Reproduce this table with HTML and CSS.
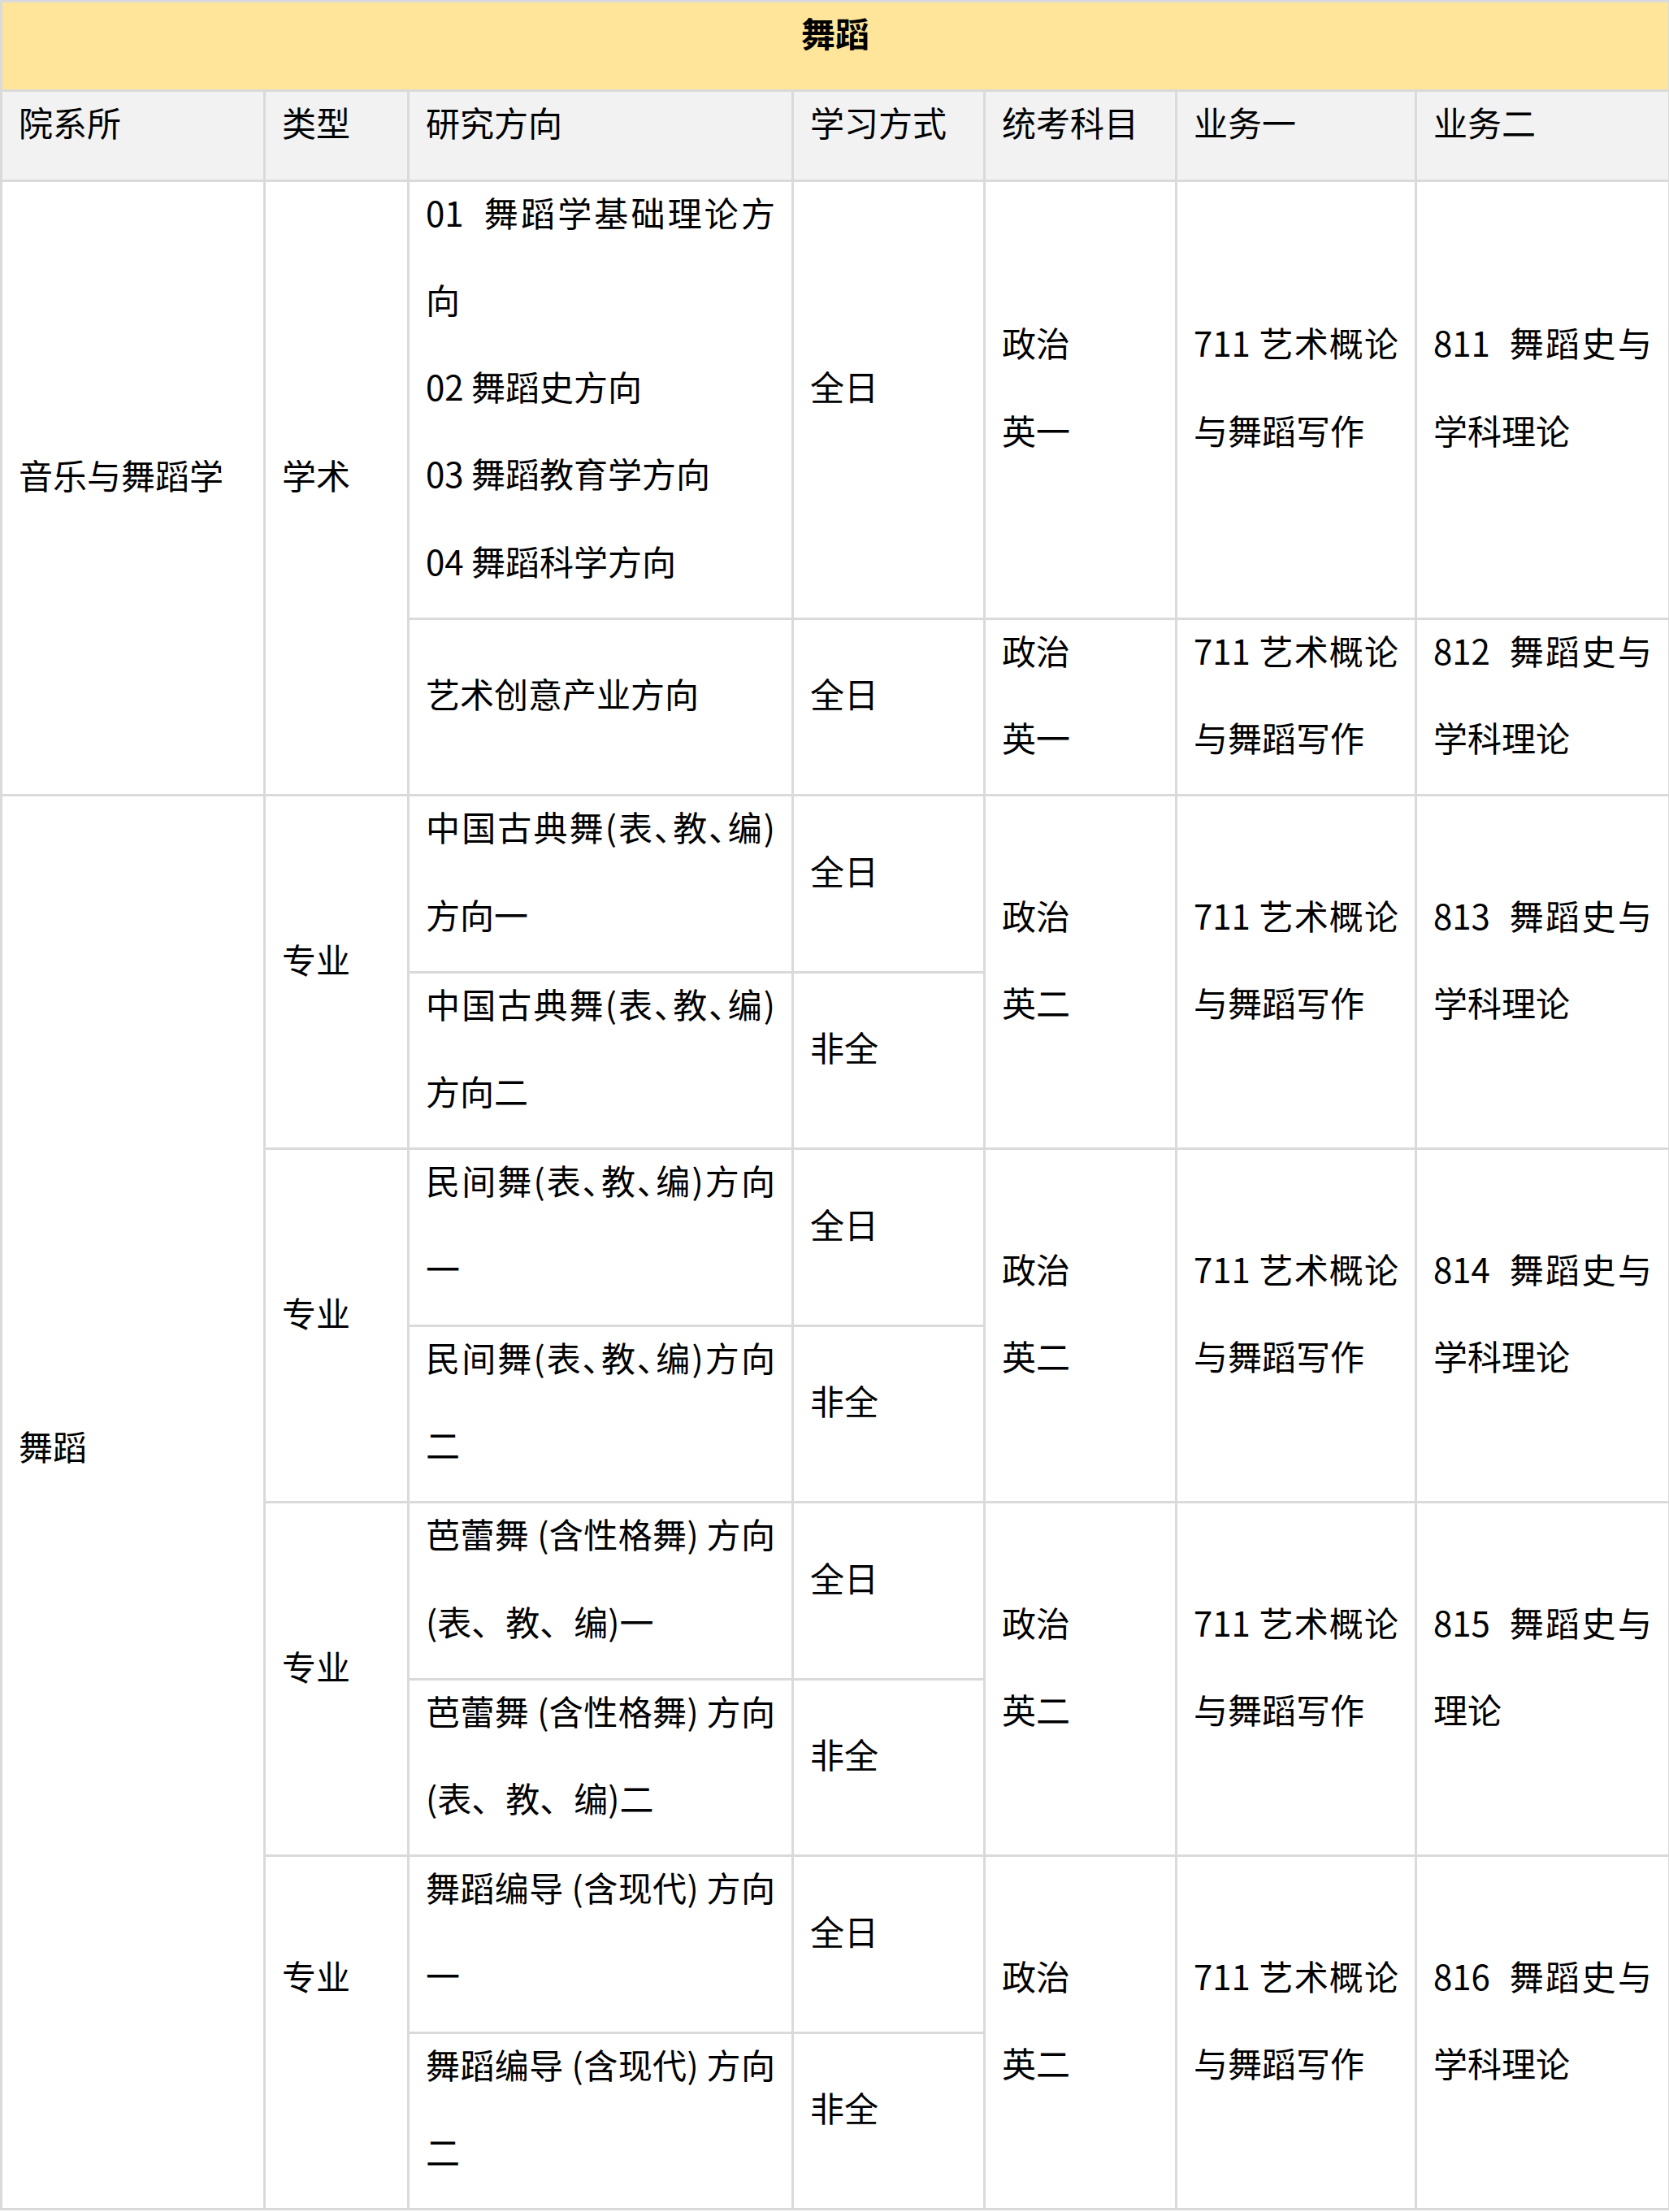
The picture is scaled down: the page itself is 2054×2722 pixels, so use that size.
FILE: index.html
```html
<!DOCTYPE html>
<html lang="zh-CN">
<head>
<meta charset="utf-8">
<title>舞蹈</title>
<link rel="stylesheet" href="styles.css">
</head>
<body>
<table class="grid">
  <colgroup>
    <col class="w1"><col class="w2"><col class="w3"><col class="w4"><col class="w5"><col class="w6"><col class="w7">
  </colgroup>
  <tr class="title"><td colspan="7"><div class="v">舞蹈</div></td></tr>
  <tr class="head">
    <td><div class="v">院系所</div></td>
    <td><div class="v">类型</div></td>
    <td><div class="v">研究方向</div></td>
    <td><div class="v">学习方式</div></td>
    <td><div class="v">统考科目</div></td>
    <td><div class="v">业务一</div></td>
    <td><div class="v">业务二</div></td>
  </tr>
  <tr>
    <td rowspan="2"><div class="v">音乐与舞蹈学</div></td>
    <td rowspan="2"><div class="v">学术</div></td>
    <td><div class="v">01&nbsp; 舞蹈学基础理论方向<br>02 舞蹈史方向<br>03 舞蹈教育学方向<br>04 舞蹈科学方向</div></td>
    <td><div class="v">全日</div></td>
    <td><div class="v">政治<br>英一</div></td>
    <td><div class="v">711 艺术概论与舞蹈写作</div></td>
    <td><div class="v">811&nbsp; 舞蹈史与学科理论</div></td>
  </tr>
  <tr>
    <td><div class="v">艺术创意产业方向</div></td>
    <td><div class="v">全日</div></td>
    <td><div class="v">政治<br>英一</div></td>
    <td><div class="v">711 艺术概论与舞蹈写作</div></td>
    <td><div class="v">812&nbsp; 舞蹈史与学科理论</div></td>
  </tr>
  <tr>
    <td rowspan="8"><div class="v extra">舞蹈</div></td>
    <td rowspan="2"><div class="v">专业</div></td>
    <td><div class="v tight">中国古典舞(表、教、编)方向一</div></td>
    <td><div class="v">全日</div></td>
    <td rowspan="2"><div class="v">政治<br>英二</div></td>
    <td rowspan="2"><div class="v">711 艺术概论与舞蹈写作</div></td>
    <td rowspan="2"><div class="v">813&nbsp; 舞蹈史与学科理论</div></td>
  </tr>
  <tr>
    <td><div class="v tight">中国古典舞(表、教、编)方向二</div></td>
    <td><div class="v">非全</div></td>
  </tr>
  <tr>
    <td rowspan="2"><div class="v">专业</div></td>
    <td><div class="v tight">民间舞(表、教、编)方向一</div></td>
    <td><div class="v">全日</div></td>
    <td rowspan="2"><div class="v">政治<br>英二</div></td>
    <td rowspan="2"><div class="v">711 艺术概论与舞蹈写作</div></td>
    <td rowspan="2"><div class="v">814&nbsp; 舞蹈史与学科理论</div></td>
  </tr>
  <tr>
    <td><div class="v tight">民间舞(表、教、编)方向二</div></td>
    <td><div class="v">非全</div></td>
  </tr>
  <tr>
    <td rowspan="2"><div class="v">专业</div></td>
    <td><div class="v">芭蕾舞 (含性格舞) 方向(表、教、编)一</div></td>
    <td><div class="v">全日</div></td>
    <td rowspan="2"><div class="v">政治<br>英二</div></td>
    <td rowspan="2"><div class="v">711 艺术概论与舞蹈写作</div></td>
    <td rowspan="2"><div class="v">815&nbsp; 舞蹈史与理论</div></td>
  </tr>
  <tr>
    <td><div class="v">芭蕾舞 (含性格舞) 方向(表、教、编)二</div></td>
    <td><div class="v">非全</div></td>
  </tr>
  <tr>
    <td rowspan="2"><div class="v extra">专业</div></td>
    <td><div class="v">舞蹈编导 (含现代) 方向一</div></td>
    <td><div class="v">全日</div></td>
    <td rowspan="2"><div class="v">政治<br>英二</div></td>
    <td rowspan="2"><div class="v">711 艺术概论与舞蹈写作</div></td>
    <td rowspan="2"><div class="v">816&nbsp; 舞蹈史与学科理论</div></td>
  </tr>
  <tr>
    <td><div class="v">舞蹈编导 (含现代) 方向二</div></td>
    <td><div class="v">非全</div></td>
  </tr>
</table>
</body>
</html>
```

FILE: styles.css
```css
html {
  overflow: hidden;
}
body {
  margin: 0;
  background: #ffffff;
  font-family: "Noto Sans CJK SC", "Noto Sans", sans-serif;
  font-size: 42px;
  color: #000000;
}
.grid {
  width: 2056px;
  table-layout: fixed;
  border-collapse: collapse;
  line-height: 107.25px;
}
.w1 { width: 324px; }
.w2 { width: 177px; }
.w3 { width: 473px; }
.w4 { width: 236px; }
.w5 { width: 236px; }
.w6 { width: 295px; }
.w7 { width: 312px; }
.grid td {
  border: 3px solid #dadada;
  padding: 0 20px;
  vertical-align: middle;
  text-align: justify;
}
.v {
  margin: -17px 0 17px;
}
.v.extra {
  padding-bottom: 107.25px;
}
.v.tight {
  font-feature-settings: "palt" 1;
}
.title td {
  background: #ffe599;
  text-align: center;
  font-weight: 700;
}
.head td {
  background: #f2f2f2;
}
```
